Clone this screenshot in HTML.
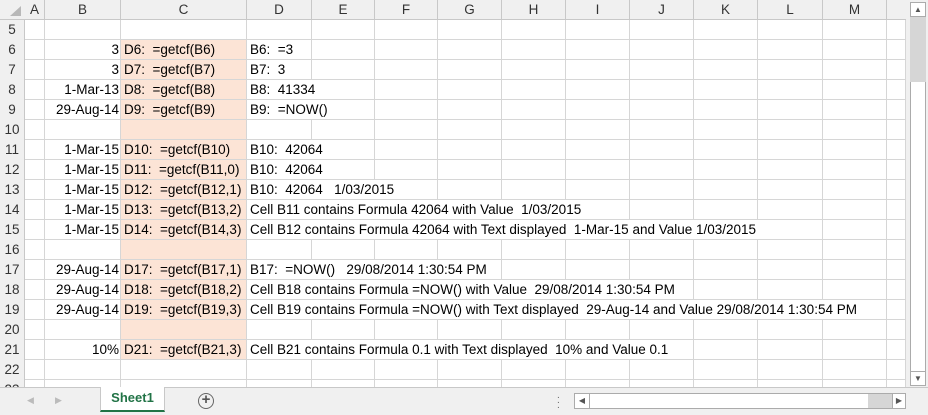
<!DOCTYPE html>
<html><head><style>
*{margin:0;padding:0;box-sizing:border-box}
body{width:928px;height:415px;overflow:hidden;background:#fff;font-family:"Liberation Sans",Calibri,sans-serif;font-size:13.5px;color:#000;position:relative}
.a{position:absolute}
.h{background:#f0f0f0;color:#333;text-align:center;font-size:13.5px}
.vl{position:absolute;top:20px;width:1px;height:367px;background:#d6d6d6}
.hl{position:absolute;left:25px;width:881px;height:1px;background:#d6d6d6}
.t{position:absolute;white-space:nowrap;line-height:20px;height:19px}
.r{text-align:right}
</style></head><body>
<div class="a h" style="left:0;top:0;width:906px;height:20px;border-bottom:1px solid #c8c8c8"></div>
<div class="a h" style="left:0;top:20px;width:25px;height:367px;border-right:1px solid #c8c8c8"></div>
<svg class="a" style="left:8px;top:5px" width="14" height="12"><polygon points="13,1 13,11 2,11" fill="#b8b8b8"/></svg>
<div class="a" style="left:121px;top:40px;width:126px;height:320px;background:#fce4d6"></div>
<div id="g"></div>
<div class="a" style="left:0;top:387px;width:928px;height:28px;background:#f0f0f0;border-top:1px solid #c8c8c8"></div>
<div class="a" style="left:100px;top:387px;width:65px;height:25px;background:#fff;border:1px solid #c8c8c8;border-top:none;border-bottom:2px solid #217346;color:#217346;font-weight:bold;text-align:center;line-height:22px;font-size:13px">Sheet1</div>
<div class="a" style="left:198px;top:393px;width:16px;height:16px;border:1.5px solid #666;border-radius:50%;color:#555;font-size:15px;line-height:12px;text-align:center;font-weight:bold">+</div>
<div class="a" style="left:27px;top:395px;color:#bbb;font-size:9px">&#9664;</div>
<div class="a" style="left:55px;top:395px;color:#bbb;font-size:9px">&#9654;</div>
<div class="a" style="left:557px;top:393px;color:#666;font-size:10px;line-height:5px">.<br>.<br>.</div>
<div class="a" style="left:574px;top:393px;width:332px;height:16px;background:#fff;border:1px solid #ababab"></div>
<div class="a" style="left:574px;top:393px;width:16px;height:16px;border:1px solid #ababab;color:#555;font-size:8px;line-height:14px;text-align:center">&#9664;</div>
<div class="a" style="left:868px;top:394px;width:25px;height:14px;background:#d6d6d6"></div>
<div class="a" style="left:892px;top:393px;width:14px;height:16px;border:1px solid #ababab;background:#fff;color:#555;font-size:8px;line-height:14px;text-align:center">&#9654;</div>
<div class="a" style="left:906px;top:0;width:22px;height:387px;background:#f0f0f0"></div>
<div class="a" style="left:910px;top:2px;width:16px;height:383px;background:#fff;border:1px solid #ababab"></div>
<div class="a" style="left:910px;top:16px;width:16px;height:66px;background:#d6d6d6"></div>
<div class="a" style="left:910px;top:2px;width:16px;height:15px;border:1px solid #ababab;background:#fff;color:#555;font-size:8px;line-height:13px;text-align:center">&#9650;</div>
<div class="a" style="left:910px;top:371px;width:16px;height:15px;border:1px solid #ababab;background:#fff;color:#555;font-size:8px;line-height:13px;text-align:center">&#9660;</div>
<script>
var cols=[25,45,121,247,312,375,438,502,566,630,694,758,823,887,906];
var names="ABCDEFGHIJKLM";
var g="";
for(var i=0;i<13;i++){g+='<div class="t h" style="left:'+cols[i]+'px;top:0;width:'+(cols[i+1]-cols[i])+'px;border-right:1px solid #c8c8c8;background:#f0f0f0">'+names[i]+'</div>';}
for(var i=1;i<cols.length;i++){g+='<div class="vl" style="left:'+(cols[i]-1)+'px"></div>';}
for(var r=0;r<19;r++){var y=39+r*20;g+='<div class="hl" style="top:'+y+'px"></div>';
g+='<div class="t h" style="left:0;top:'+(20+r*20)+'px;width:24px">'+(5+r)+'</div>';}
var d={6:["3","D6:  =getcf(B6)","B6:  =3"],7:["3","D7:  =getcf(B7)","B7:  3"],8:["1-Mar-13","D8:  =getcf(B8)","B8:  41334"],9:["29-Aug-14","D9:  =getcf(B9)","B9:  =NOW()"],
11:["1-Mar-15","D10:  =getcf(B10)","B10:  42064"],12:["1-Mar-15","D11:  =getcf(B11,0)","B10:  42064"],13:["1-Mar-15","D12:  =getcf(B12,1)","B10:  42064   1/03/2015"],
14:["1-Mar-15","D13:  =getcf(B13,2)","Cell B11 contains Formula 42064 with Value  1/03/2015"],15:["1-Mar-15","D14:  =getcf(B14,3)","Cell B12 contains Formula 42064 with Text displayed  1-Mar-15 and Value 1/03/2015"],
17:["29-Aug-14","D17:  =getcf(B17,1)","B17:  =NOW()   29/08/2014 1:30:54 PM"],18:["29-Aug-14","D18:  =getcf(B18,2)","Cell B18 contains Formula =NOW() with Value  29/08/2014 1:30:54 PM"],
19:["29-Aug-14","D19:  =getcf(B19,3)","Cell B19 contains Formula =NOW() with Text displayed  29-Aug-14 and Value 29/08/2014 1:30:54 PM"],
21:["10%","D21:  =getcf(B21,3)","Cell B21 contains Formula 0.1 with Text displayed  10% and Value 0.1"]};
for(var k in d){var y=20+(k-5)*20;var v=d[k];
g+='<div class="t r" style="left:45px;width:74px;top:'+y+'px">'+v[0]+'</div>';
g+='<div class="t" style="left:124px;top:'+y+'px;background:#fce4d6;width:121px;white-space:pre">'+v[1]+'</div>';
g+='<div class="t" style="left:250px;top:'+y+'px;background:#fff;padding-right:2px;white-space:pre">'+v[2]+'</div>';}
document.getElementById("g").innerHTML=g;
</script>
</body></html>
